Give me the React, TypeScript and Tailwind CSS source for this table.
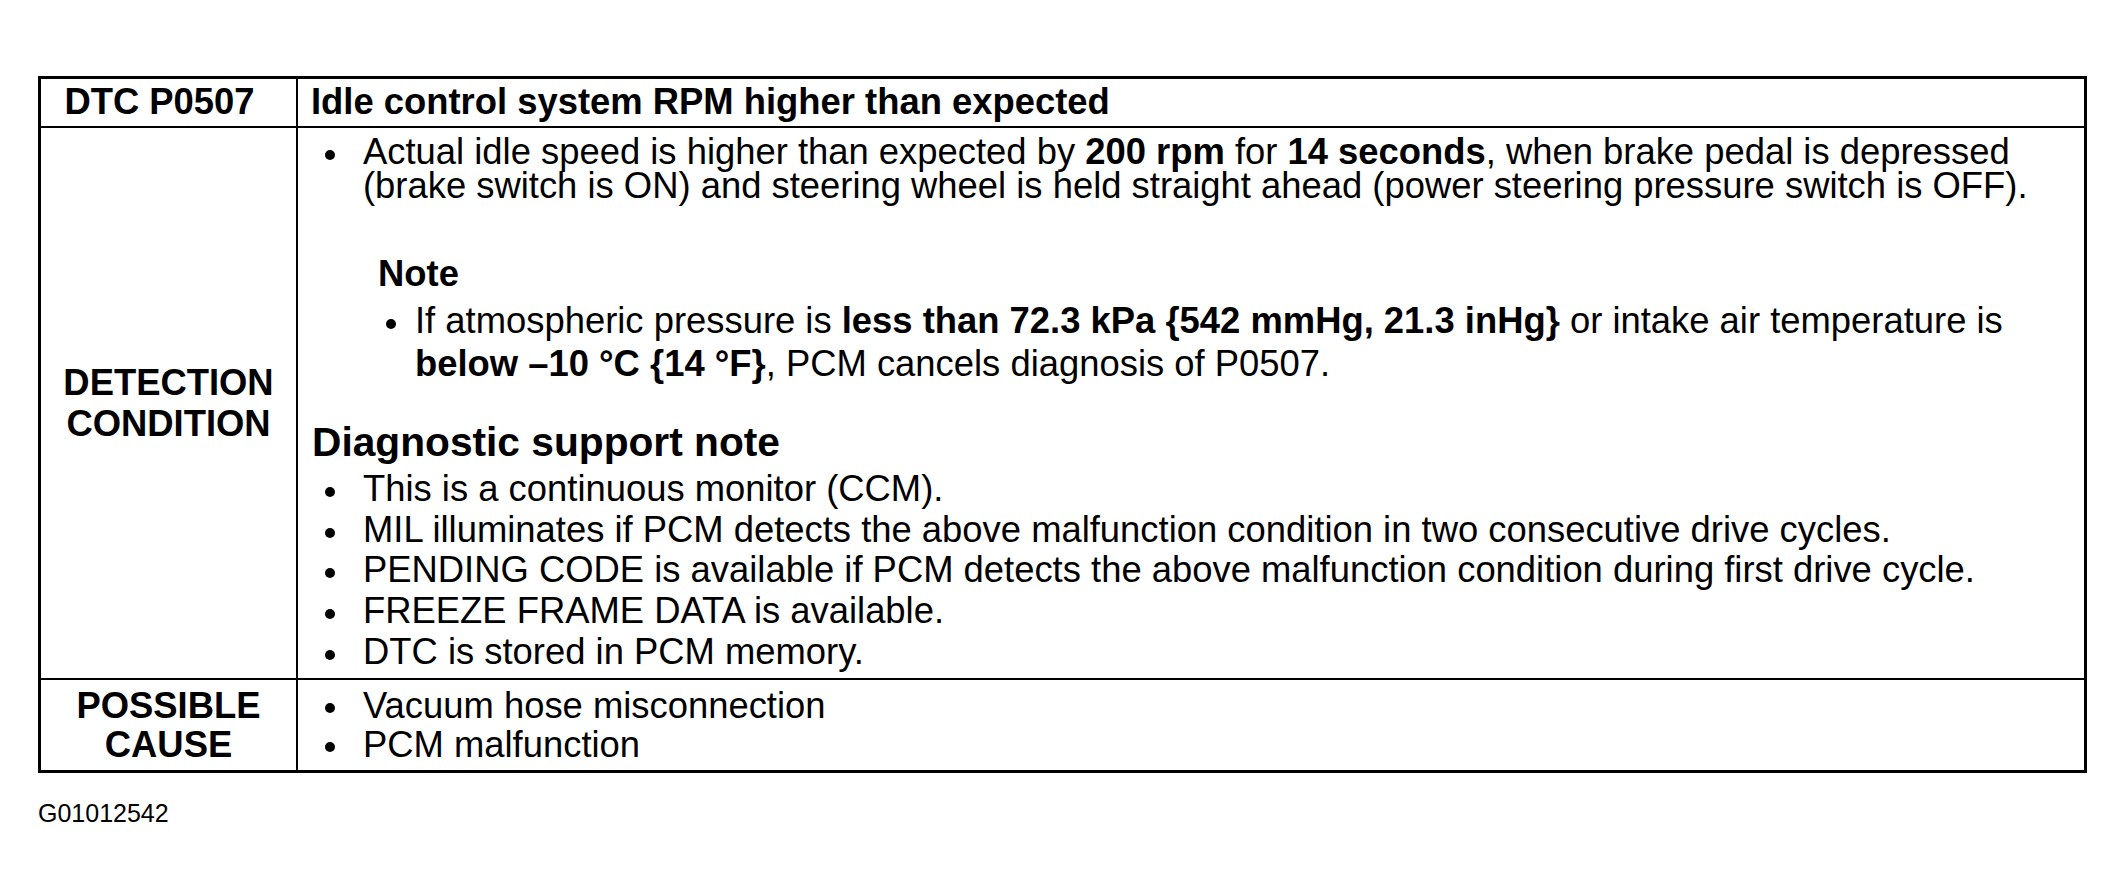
export default function App() {
  return (
    <div className="w-[2124px] h-[893px] overflow-hidden bg-white text-black font-['Liberation_Sans',Arial,Helvetica,sans-serif]">
      <div className="pt-[76px] pl-[38px]">
        <div className="w-[2049px] border-[3px] border-black">
          {/* Header row */}
          <div className="flex h-[49px] border-b-2 border-black">
            <div className="flex w-[257px] shrink-0 items-center justify-center border-r-2 border-black pr-[18px] text-[36.4px] font-bold leading-none">
              DTC P0507
            </div>
            <div className="flex items-center pl-[13px] text-[36.4px] font-bold leading-none">
              Idle control system RPM higher than expected
            </div>
          </div>

          {/* Detection condition row */}
          <div className="flex h-[552px] border-b-2 border-black">
            <div className="flex w-[257px] shrink-0 items-center justify-center border-r-2 border-black text-center text-[36.4px] font-bold leading-[41px]">
              DETECTION
              <br />
              CONDITION
            </div>
            <div className="flex-1 pt-[7px] text-[36.4px]">
              <div className="flex">
                <span className="ml-[27px] mr-[28px] mt-[15px] h-[10px] w-[10px] shrink-0 rounded-full bg-black" />
                <p className="whitespace-nowrap leading-[34px]">
                  Actual idle speed is higher than expected by <b>200 rpm</b> for <b>14 seconds</b>, when brake pedal is depressed
                  <br />
                  (brake switch is ON) and steering wheel is held straight ahead (power steering pressure switch is OFF).
                </p>
              </div>

              <div className="mt-[51px] ml-[80px] font-bold leading-[40px]">Note</div>

              <div className="mt-[5px] flex">
                <span className="ml-[88px] mr-[19px] mt-[20px] h-[10px] w-[10px] shrink-0 rounded-full bg-black" />
                <p className="whitespace-nowrap leading-[43px]">
                  If atmospheric pressure is <b>less than 72.3 kPa {'{'}542 mmHg, 21.3 inHg{'}'}</b> or intake air temperature is
                  <br />
                  <b>below –10 °C {'{'}14 °F{'}'}</b>, PCM cancels diagnosis of P0507.
                </p>
              </div>

              <div className="mt-[34px] ml-[14px] text-[40.7px] font-bold leading-[46px]">Diagnostic support note</div>

              <ul className="mt-[4px] leading-[40.7px]">
                {[
                  'This is a continuous monitor (CCM).',
                  'MIL illuminates if PCM detects the above malfunction condition in two consecutive drive cycles.',
                  'PENDING CODE is available if PCM detects the above malfunction condition during first drive cycle.',
                  'FREEZE FRAME DATA is available.',
                  'DTC is stored in PCM memory.',
                ].map((t) => (
                  <li key={t} className="flex">
                    <span className="ml-[27px] mr-[28px] mt-[18px] h-[10px] w-[10px] shrink-0 rounded-full bg-black" />
                    <span className="whitespace-nowrap">{t}</span>
                  </li>
                ))}
              </ul>
            </div>
          </div>

          {/* Possible cause row */}
          <div className="flex h-[90px]">
            <div className="flex w-[257px] shrink-0 items-center justify-center border-r-2 border-black text-center text-[36.4px] font-bold leading-[39px]">
              POSSIBLE
              <br />
              CAUSE
            </div>
            <ul className="flex flex-1 flex-col justify-center text-[36.4px] leading-[39px]">
              {['Vacuum hose misconnection', 'PCM malfunction'].map((t) => (
                <li key={t} className="flex">
                  <span className="ml-[27px] mr-[28px] mt-[17px] h-[10px] w-[10px] shrink-0 rounded-full bg-black" />
                  <span className="whitespace-nowrap">{t}</span>
                </li>
              ))}
            </ul>
          </div>
        </div>

        <div className="mt-[25px] text-[25px] leading-[30px]">G01012542</div>
      </div>
    </div>
  );
}
